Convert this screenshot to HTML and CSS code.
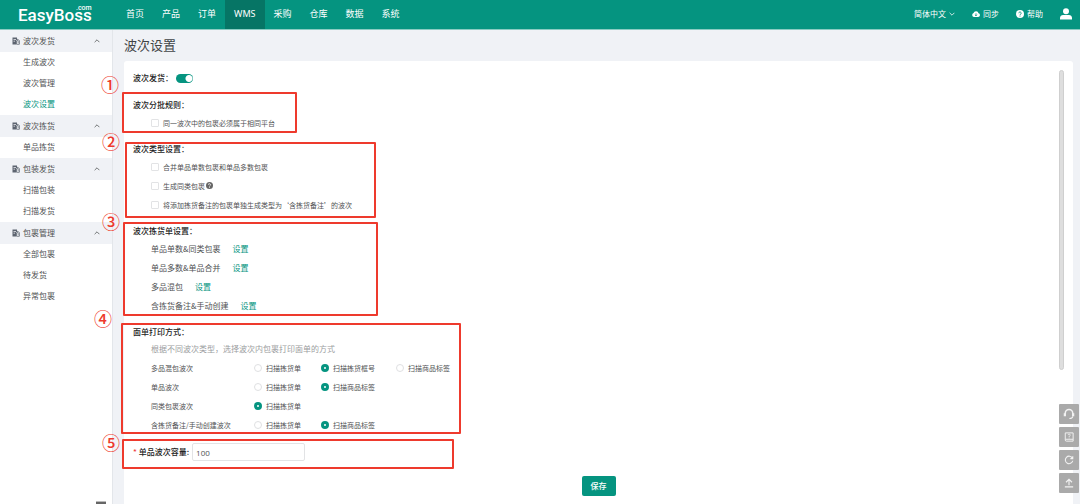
FILE: index.html
```html
<!DOCTYPE html>
<html lang="zh-CN">
<head>
<meta charset="utf-8">
<title>波次设置</title>
<link rel="stylesheet" href="styles.css">
</head>
<body>
<svg class="defs" aria-hidden="true">
  <symbol id="doc" viewBox="0 0 16 16"><path fill="currentColor" fill-rule="evenodd" d="M1 1h9v5H8v9H1zM3 4v1.500h5V4zM3 7.500V9h3V7.500z"/><path fill="none" stroke="currentColor" stroke-width="1.600" d="M9 14.500v-7h2V4.500l3.700 2.500v7.500zM11 10h3"/></symbol>
  <symbol id="up" viewBox="0 0 10 10"><path fill="none" stroke="currentColor" stroke-width="1.300" d="M1 7l4-4 4 4"/></symbol>
  <symbol id="down" viewBox="0 0 10 10"><path fill="none" stroke="currentColor" stroke-width="1.300" d="M1 3l4 4 4-4"/></symbol>
  <symbol id="help" viewBox="0 0 16 16"><circle cx="8" cy="8" r="8" fill="currentColor"/><path class="mark" fill="none" stroke-width="1.800" d="M5.500 6.300a2.500 2.300 0 1 1 3.800 2C8.300 8.900 8 9.200 8 10.200M8 11.300v1.800"/></symbol>
</svg>

<header class="topbar">
  <a class="logo" href="#">EasyBoss<span class="logo-com">.com</span></a>
  <nav class="nav">
    <a href="#">首页</a><a href="#">产品</a><a href="#">订单</a><a href="#" class="current">WMS</a><a href="#">采购</a><a href="#">仓库</a><a href="#">数据</a><a href="#">系统</a>
  </nav>
  <div class="tools">
    <button type="button">简体中文<svg class="tool-chevron"><use href="#down"/></svg></button>
    <button type="button"><svg class="tool-icon" viewBox="0 0 16 16"><path fill="currentColor" d="M4 14a4 4 0 0 1-.8-7.800A5 5 0 0 1 13 6.500 3.800 3.800 0 0 1 12.300 14z"/><path fill="none" stroke="#059480" stroke-width="1.500" d="M8 6.500v5M5.800 9.500L8 11.700l2.200-2.200"/></svg>同步</button>
    <button type="button"><svg class="tool-icon on-green"><use href="#help"/></svg>帮助</button>
    <button type="button" aria-label="账户"><svg class="user" viewBox="0 0 12 12"><circle cx="6" cy="3.200" r="3" fill="currentColor"/><path fill="currentColor" d="M0 11.500V10c0-2 1.500-3 3-3h6c1.500 0 3 1 3 3v1.500z"/></svg></button>
  </div>
</header>

<div class="shell">
  <aside class="sidebar">
    <button class="group" type="button"><svg class="doc"><use href="#doc"/></svg>波次发货<svg class="fold"><use href="#up"/></svg></button>
    <a href="#">生成波次</a><a href="#">波次管理</a><a href="#" class="active">波次设置</a>
    <button class="group" type="button"><svg class="doc"><use href="#doc"/></svg>波次拣货<svg class="fold"><use href="#up"/></svg></button>
    <a href="#">单品拣货</a>
    <button class="group" type="button"><svg class="doc"><use href="#doc"/></svg>包装发货<svg class="fold"><use href="#up"/></svg></button>
    <a href="#">扫描包装</a><a href="#">扫描发货</a>
    <button class="group" type="button"><svg class="doc"><use href="#doc"/></svg>包裹管理<svg class="fold"><use href="#up"/></svg></button>
    <a href="#">全部包裹</a><a href="#">待发货</a><a href="#">异常包裹</a>
    <button class="collapse" type="button" aria-label="收起菜单"></button>
  </aside>

  <main class="main">
    <h1>波次设置</h1>
    <form class="card">
      <div class="switch-row"><label for="wave">波次发货：</label><input class="switch" id="wave" type="checkbox" role="switch" checked></div>

      <section class="section">
        <h2>波次分批规则：</h2>
        <label class="check"><input type="checkbox">同一波次中的包裹必须属于相同平台</label>
      </section>

      <section class="section">
        <h2>波次类型设置：</h2>
        <label class="check"><input type="checkbox">合并单品单数包裹和单品多数包裹</label>
        <label class="check"><input type="checkbox"><span class="with-hint">生成同类包裹<svg class="hint"><use href="#help"/></svg></span></label>
        <label class="check"><input type="checkbox">将添加拣货备注的包裹单独生成类型为‘含拣货备注’的波次</label>
      </section>

      <section class="section">
        <h2>波次拣货单设置：</h2>
        <div class="setting">单品单数&amp;同类包裹<a href="#">设置</a></div>
        <div class="setting">单品多数&amp;单品合并<a href="#">设置</a></div>
        <div class="setting">多品混包<a href="#">设置</a></div>
        <div class="setting">含拣货备注&amp;手动创建<a href="#">设置</a></div>
      </section>

      <section class="section">
        <h2>面单打印方式：</h2>
        <p class="note">根据不同波次类型，选择波次内包裹打印面单的方式</p>
        <div class="print" role="radiogroup" aria-labelledby="p1"><span id="p1">多品混包波次</span>
          <label><input type="radio" name="mixed">扫描拣货单</label>
          <label><input type="radio" name="mixed" checked>扫描拣货框号</label>
          <label><input type="radio" name="mixed">扫描商品标签</label></div>
        <div class="print" role="radiogroup" aria-labelledby="p2"><span id="p2">单品波次</span>
          <label><input type="radio" name="single">扫描拣货单</label>
          <label><input type="radio" name="single" checked>扫描商品标签</label></div>
        <div class="print" role="radiogroup" aria-labelledby="p3"><span id="p3">同类包裹波次</span>
          <label><input type="radio" name="same" checked>扫描拣货单</label></div>
        <div class="print" role="radiogroup" aria-labelledby="p4"><span id="p4">含拣货备注/手动创建波次</span>
          <label><input type="radio" name="manual">扫描拣货单</label>
          <label><input type="radio" name="manual" checked>扫描商品标签</label></div>
      </section>

      <div class="capacity"><label for="cap"><span class="required">*</span> 单品波次容量:</label><input id="cap" type="text" value="100"></div>
      <div class="actions"><button type="button" class="save">保存</button></div>
      <div class="scrollbar"></div>
    </form>
  </main>
</div>

<div class="float-tools">
  <button type="button" aria-label="客服"><svg viewBox="0 0 16 16"><path d="M3 9V7a5 5 0 0 1 10 0v2" stroke-width="2"/><path d="M2.500 7v4M13.500 7v4" stroke-width="3"/><path d="M13 11c0 2-2 3-4.500 3" stroke-width="1.500"/></svg></button>
  <button type="button" aria-label="手册"><svg viewBox="0 0 16 16"><path d="M3 2.500h10.500v11H4.500A1.500 1.500 0 0 1 3 12zM3.500 11h10" stroke-width="1.300"/><path d="M6.800 5.500a1.400 1.400 0 1 1 2 1.300L8.200 7.500V8M8.200 8.800v1" stroke-width="1.200"/></svg></button>
  <button type="button" aria-label="刷新"><svg viewBox="0 0 16 16"><path d="M12.500 5.500A5 5 0 1 0 13 9M13 3v3.200H9.800" stroke-width="1.500"/></svg></button>
  <button type="button" aria-label="返回顶部"><svg viewBox="0 0 16 16"><path d="M8 11V3M4 7l4-4 4 4M2.500 13.200h11" stroke-width="1.500"/></svg></button>
</div>

<div class="marks">
  <div class="box b1"></div><div class="box b2"></div><div class="box b3"></div><div class="box b4"></div><div class="box b5"></div>
  <span class="num n1">①</span><span class="num n2">②</span><span class="num n3">③</span><span class="num n4">④</span><span class="num n5">⑤</span>
</div>
</body>
</html>
```
FILE: styles.css
```css
* { box-sizing: border-box; }
body {
  margin: 0;
  height: 100vh;
  display: flex;
  flex-direction: column;
  overflow: hidden;
  position: relative;
  background: #f0f2f6;
  color: #505254;
  font: 8px/16px "Noto Sans CJK SC", sans-serif;
}
a { color: inherit; text-decoration: none; }
button, input { font: inherit; color: inherit; margin: 0; padding: 0; border: 0; background: none; }
h1, h2, p { margin: 0; font-weight: 400; }
.defs { position: absolute; width: 0; height: 0; }

.topbar { display: flex; flex: none; height: 30px; background: #059480; border-bottom: 1px solid #8accc2; color: #fff; }
.logo { position: relative; flex: none; width: 117px; padding-left: 18px; font: 500 17px/31px Roboto, sans-serif; }
.logo-com { position: absolute; left: 76px; top: 4px; font-size: 7px; line-height: 8px; }
.nav { display: flex; font-size: 9px; line-height: 28px; }
.nav a { padding: 0 9px; }
.nav .current { background: #067565; font-family: "Noto Sans", sans-serif; }
.tools { display: flex; align-items: center; gap: 17px; height: 28px; margin-left: auto; padding-right: 8px; }
.tools button { display: flex; align-items: center; gap: 3px; }
.tool-chevron { width: 6px; height: 6px; }
.tool-icon { width: 8px; height: 8px; }
.on-green { --mark: #059480; }
.mark { stroke: var(--mark, #fff); }
.user { width: 12px; height: 12px; }

.shell { display: flex; flex: 1; min-height: 0; }
.sidebar { position: relative; display: flex; flex-direction: column; flex: none; width: 113px; background: #fff; border-right: 1px solid #e3e6ea; }
.sidebar a { height: 21px; padding-left: 23px; line-height: 20px; }
.sidebar .active { color: #059480; }
.group { display: flex; align-items: center; height: 22px; padding: 0 12px; line-height: 20px; background: #f0f2f6; }
.doc { width: 8px; height: 8px; margin-right: 3px; color: #5d6470; }
.fold { width: 6px; height: 6px; margin-left: auto; }
.sidebar .collapse { position: absolute; left: 96px; bottom: 0; width: 10px; height: 3px; background: #666; border-top: 1px solid #bbb; }

.main { display: flex; flex: 1; flex-direction: column; min-width: 0; padding: 0 7px 0 11px; }
h1 { padding: 5px 0 6px; font-size: 13px; line-height: 20px; color: #414447; }
.card { position: relative; flex: 1; padding: 8px 9px 0; background: #fff; border-radius: 3px 3px 0 0; }
.switch-row { display: flex; align-items: center; height: 18px; margin-bottom: 10px; color: #222; font-weight: 500; }
.switch { appearance: none; width: 17px; height: 9px; margin-left: 3px; border-radius: 5px; background: radial-gradient(circle at 13px 50%, #fff 3px, #059480 4px); }
.section { margin-bottom: 9px; }
.section h2 { font-size: 8px; line-height: 16px; font-weight: 500; color: #222; }
.check, .setting, .print { display: flex; align-items: center; height: 19px; margin-left: 18px; }
.check, .print { font-size: 7px; }
.check { gap: 4px; }
.check input { appearance: none; width: 8px; height: 8px; border: 1px solid #e2e3e5; border-radius: 1px; }
.with-hint { display: flex; align-items: center; }
.hint { width: 7px; height: 7px; margin-left: 1px; color: #666; }
.setting { gap: 12px; }
.setting a { color: #059480; }
.note { margin-left: 18px; line-height: 18px; color: #9b9da0; }
.print { display: grid; grid-template-columns: 103px 67px 75px auto; justify-content: start; }
.print label { display: flex; align-items: center; gap: 4px; white-space: nowrap; }
.print input { appearance: none; width: 8px; height: 8px; border: 1px solid #dfe0e2; border-radius: 50%; }
.print input:checked { border: 3px solid #059480; background: #fff; }
.capacity { display: flex; align-items: center; gap: 3px; }
.capacity label { color: #222; font-weight: 500; }
.required { color: #f04040; }
.capacity input { width: 113px; height: 18px; padding: 0 3px; border: 1px solid #e2e3e5; border-radius: 2px; font-family: "Open Sans", sans-serif; }
.actions { display: flex; justify-content: center; padding-top: 15px; }
.save { width: 34px; height: 20px; border-radius: 2px; background: #059480; color: #fff; font-weight: 500; }
.scrollbar { position: absolute; right: 9px; top: 9px; width: 5px; height: 300px; border: 1px solid #cfcfcf; border-radius: 3px; background: #dedede; }

.float-tools { position: absolute; right: 1px; bottom: 11px; display: flex; flex-direction: column; gap: 3px; }
.float-tools button { display: flex; align-items: center; justify-content: center; width: 20px; height: 20px; border-radius: 1px; background: #aaa; }
.float-tools svg { width: 12px; height: 12px; fill: none; stroke: #f2f2f2; }

.marks { position: absolute; inset: 0; pointer-events: none; }
.box { position: absolute; border: 2px solid #ee3a2d; border-radius: 1px; }
.b1 { left: 122px; top: 92px; width: 175px; height: 41px; }
.b2 { left: 125px; top: 142px; width: 251px; height: 76px; }
.b3 { left: 123px; top: 222px; width: 255px; height: 94px; }
.b4 { left: 121px; top: 323px; width: 340px; height: 111px; }
.b5 { left: 122px; top: 439px; width: 332px; height: 30px; }
.num { position: absolute; color: #ee3a2d; font-size: 18px; font-weight: 500; line-height: 20px; }
.n1 { left: 101px; top: 74px; }
.n2 { left: 102px; top: 131px; }
.n3 { left: 102px; top: 211px; }
.n4 { left: 94px; top: 308px; }
.n5 { left: 102px; top: 432px; }
```
